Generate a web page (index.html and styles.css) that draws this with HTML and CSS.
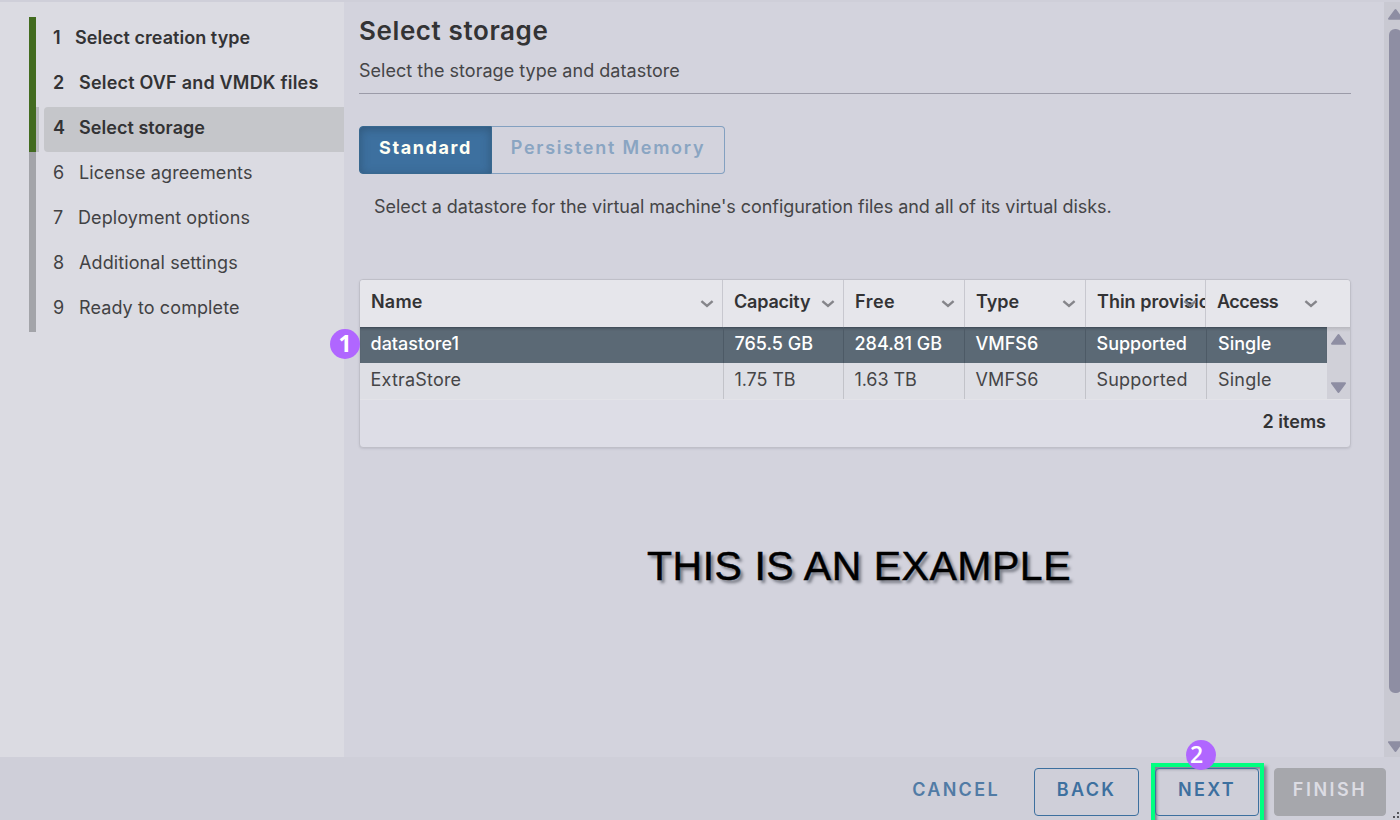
FILE: index.html
```
<!DOCTYPE html>
<html lang="en">
<head>
<meta charset="utf-8">
<title>Select storage</title>
<link rel="stylesheet" href="styles.css">
</head>
<body>
<svg class="defs" aria-hidden="true">
  <symbol id="chev" viewBox="0 0 14 8"><path d="M1.4 1.2 7 6l5.6-4.8" fill="none" stroke="#85858a" stroke-width="2.4"/></symbol>
  <symbol id="tri" viewBox="0 0 14 10"><path d="M7 1 13 9H1Z" fill="#8e8ea3" stroke="#8e8ea3" stroke-width="2" stroke-linejoin="round"/></symbol>
</svg>
<div class="wizard">
  <div class="main">
    <nav class="steps">
      <ol class="step-list">
        <li class="step done s1"><span class="num">1</span><span>Select creation type</span></li>
        <li class="step done s2"><span class="num">2</span><span>Select OVF and VMDK files</span></li>
        <li class="step done current"><span class="num">4</span><span>Select storage</span></li>
        <li class="step"><span class="num">6</span><span>License agreements</span></li>
        <li class="step s7"><span class="num">7</span><span>Deployment options</span></li>
        <li class="step"><span class="num">8</span><span>Additional settings</span></li>
        <li class="step"><span class="num">9</span><span>Ready to complete</span></li>
      </ol>
    </nav>
    <section class="content">
      <h1 class="title">Select storage</h1>
      <p class="subtitle">Select the storage type and datastore</p>
      <div class="tabs">
        <button class="tab active">Standard</button><button class="tab idle">Persistent Memory</button>
      </div>
      <p class="hint">Select a datastore for the virtual machine's configuration files and all of its virtual disks.</p>
      <div class="grid">
        <div class="head">
          <div class="th name">Name<svg class="chev"><use href="#chev"/></svg></div>
          <div class="th capacity">Capacity<svg class="chev"><use href="#chev"/></svg></div>
          <div class="th free">Free<svg class="chev"><use href="#chev"/></svg></div>
          <div class="th">Type<svg class="chev"><use href="#chev"/></svg></div>
          <div class="th thin">Thin provisioning<svg class="chev"><use href="#chev"/></svg></div>
          <div class="th access">Access<svg class="chev"><use href="#chev"/></svg></div>
        </div>
        <div class="body">
          <div class="rows">
            <div class="row selected"><div>datastore1</div><div>765.5 GB</div><div>284.81 GB</div><div>VMFS6</div><div>Supported</div><div>Single</div></div>
            <div class="row"><div>ExtraStore</div><div class="size">1.75 TB</div><div class="size">1.63 TB</div><div>VMFS6</div><div>Supported</div><div>Single</div></div>
          </div>
          <div class="mini-scroll"><svg class="tri"><use href="#tri"/></svg><svg class="tri down"><use href="#tri"/></svg></div>
        </div>
        <div class="foot">2 items</div>
        <span class="badge one">1</span>
      </div>
      <div class="example">THIS IS AN EXAMPLE</div>
    </section>
    <div class="scroll"><svg class="tri"><use href="#tri"/></svg><div class="thumb"></div><svg class="tri down"><use href="#tri"/></svg></div>
  </div>
  <footer class="actions">
    <button class="btn cancel">CANCEL</button>
    <button class="btn back">BACK</button>
    <div class="next-wrap"><button class="btn next">NEXT</button><span class="badge two">2</span></div>
    <button class="btn finish">FINISH</button>
    <svg class="grip" viewBox="0 0 8 8"><path d="M4 0h2v2H4zM0 4h2v2H0zM4 4h2v2H4z" fill="#55555a"/></svg>
  </footer>
</div>
</body>
</html>
```
FILE: styles.css
```
* { box-sizing: border-box; }
body {
  margin: 0;
  width: 1400px;
  height: 820px;
  overflow: hidden;
  background: #cfcfd9;
  color: #333335;
  font: 400 18px "Inter", "Liberation Sans", sans-serif;
}
h1, p, ol { margin: 0; padding: 0; }
button { font: inherit; margin: 0; padding: 0; background: none; }
.defs { display: none; }
.wizard { height: 820px; padding-top: 2px; display: flex; flex-direction: column; }
.main { height: 755px; display: flex; background: #d3d3dd; }

.steps { width: 344px; padding: 15px 0 0 29px; background: #dbdbe2; flex: none; }
.step-list { list-style: none; }
.step {
  display: flex;
  align-items: center;
  height: 45px;
  padding: 0 0 4px 17px;
  border-left: 7px solid #a3a4a9;
  color: #424244;
  letter-spacing: 0.1px;
  white-space: nowrap;
}
.num { width: 26px; flex: none; }
.s1 .num { width: 22px; }
.s7 .num { width: 25px; }
.done { border-left-color: #426b1f; font-weight: 600; color: #333335; letter-spacing: 0.05px; }
.s2 { letter-spacing: 0.2px; }
.current {
  background: linear-gradient(#b9babf, #b9babf) 0 0 / 3px 100% no-repeat;
  position: relative;
  z-index: 0;
}
.current::before {
  content: "";
  position: absolute;
  z-index: -1;
  inset: 0 0 0 8px;
  border-radius: 4px 0 0 4px;
  background: #c5c6ca;
}

.content { flex: 1; padding: 12px 33px 0 15px; }
.title { height: 36px; line-height: 34px; font-size: 26px; font-weight: 600; letter-spacing: 0.6px; }
.subtitle { height: 44px; line-height: 41px; border-bottom: 1px solid #9b9ba8; color: #454547; letter-spacing: 0.03px; }
.tabs { display: flex; margin-top: 32px; height: 48px; }
.tab { height: 48px; padding-bottom: 5px; font-weight: 600; }
.active {
  width: 133px;
  border: 1px solid #38688f;
  border-radius: 4px 0 0 4px;
  background: #3d709f;
  box-shadow: inset 0 2px 10px rgba(40, 70, 95, 0.55);
  color: #fffff4;
  font-weight: 700;
  letter-spacing: 1.6px;
}
.idle {
  width: 233px;
  border: 1px solid #83a0c0;
  border-left: 0;
  border-radius: 0 4px 4px 0;
  color: #8aa5c2;
  letter-spacing: 1.75px;
}
.hint { height: 105px; padding-left: 15px; line-height: 65px; color: #454547; letter-spacing: -0.05px; white-space: nowrap; }

.grid {
  position: relative;
  width: 992px;
  height: 169px;
  border: 1px solid #bfbfc8;
  border-radius: 4px;
  background: #dddde6;
  box-shadow: 0 1px 2px rgba(90, 90, 110, 0.15);
}
.head {
  display: grid;
  grid-template-columns: 363px 121px 121px 121px 120px 144px;
  height: 47px;
  border-radius: 3px 3px 0 0;
  background: #e6e6eb;
  font-weight: 600;
}
.th {
  position: relative;
  overflow: hidden;
  padding-left: 11px;
  border-right: 1px solid #c8c8cf;
  line-height: 44px;
  white-space: nowrap;
}
.th .chev { position: absolute; right: 8px; top: 20px; width: 14px; height: 8px; }
.th.free .chev, .th.free + .th .chev { right: 9px; }
.name { letter-spacing: 0.2px; }
.capacity { letter-spacing: -0.2px; }
.free { letter-spacing: 0.5px; }
.thin { letter-spacing: 0; }
.access { border: 0; letter-spacing: -0.5px; }
.th.access .chev { right: 32px; }
.body { display: flex; height: 72px; box-shadow: inset 0 3px 3px -1px rgba(80, 80, 90, 0.3); }
.rows { width: 967px; }
.row {
  display: grid;
  grid-template-columns: 364px 120px 121px 121px 121px 120px;
  height: 36px;
  line-height: 33px;
  background: #dedfe5;
  color: #454547;
  letter-spacing: 0.2px;
}
.row div { padding-left: 10.5px; border-right: 1px solid #c2c3c9; white-space: nowrap; }
.row div:last-child { border: 0; padding-left: 11px; }
.row .size { letter-spacing: -0.1px; }
.selected {
  background: #5b6975;
  color: #fff;
  font-weight: 500;
  letter-spacing: 0;
  box-shadow: inset 0 3px 3px -2px rgba(20, 30, 40, 0.5);
}
.selected div { border-color: #4d5a66; }
.mini-scroll {
  width: 23px;
  padding: 7px 0 6px 4px;
  display: flex;
  flex-direction: column;
  justify-content: space-between;
  background: linear-gradient(#b9b9bf, #d0d0d8 5px);
}
.tri { display: block; width: 15px; height: 11px; flex: none; }
.down { transform: rotate(180deg); }
.foot { height: 48px; padding-right: 24px; border-top: 1px solid #e3e3e8; line-height: 44px; text-align: right; font-weight: 600; }

.badge {
  position: absolute;
  width: 30px;
  height: 30px;
  border-radius: 50%;
  background: #b066ff;
  color: #fff;
  font: 700 23px/29px "Open Sans", sans-serif;
  text-align: center;
}
.one { left: -30px; top: 49px; }
.example {
  margin: 92px 0 0 288px;
  color: #000;
  font: 41px/52px "Liberation Sans", Arial, sans-serif;
  letter-spacing: 0.52px;
  -webkit-text-stroke: 0.5px #000;
  text-shadow: 3px 3px 3px rgba(60, 65, 75, 0.6);
  white-space: nowrap;
}

.scroll {
  width: 16px;
  padding: 7px 0 5px 4px;
  display: flex;
  flex-direction: column;
  overflow: hidden;
  background: #c9c9d2;
}
.thumb { width: 13px; height: 664px; margin: 9px 0 auto 1px; border-radius: 6px; background: #8e8ea3; flex: none; }

.actions { position: relative; height: 63px; padding-top: 11px; display: flex; }
.btn {
  height: 48px;
  padding-bottom: 5px;
  border: 1px solid #3d709f;
  border-radius: 4px;
  color: #3d709f;
  font-weight: 600;
  letter-spacing: 2.3px;
}
.cancel { width: 120px; margin-left: 896px; border-color: transparent; color: #517ba5; }
.back { width: 105px; margin-left: 18px; }
.next-wrap {
  position: relative;
  width: 113px;
  height: 61px;
  margin: -5px 0 0 12px;
  border: 4px solid #00ff80;
  box-shadow: 3px 3px 3px rgba(60, 60, 80, 0.5), inset 2px 2px 3px rgba(60, 60, 80, 0.55);
  padding-top: 1px;
}
.next { width: 104px; }
.next-wrap .two { left: 31px; top: -27px; padding-right: 9px; font-weight: 600; }
.finish { width: 112px; margin-left: 10px; background: #a6a7ac; border-color: #a6a7ac; color: #dcdce3; letter-spacing: 2.5px; }
.grip { position: absolute; right: -1px; bottom: 0; width: 8px; height: 8px; }
```
